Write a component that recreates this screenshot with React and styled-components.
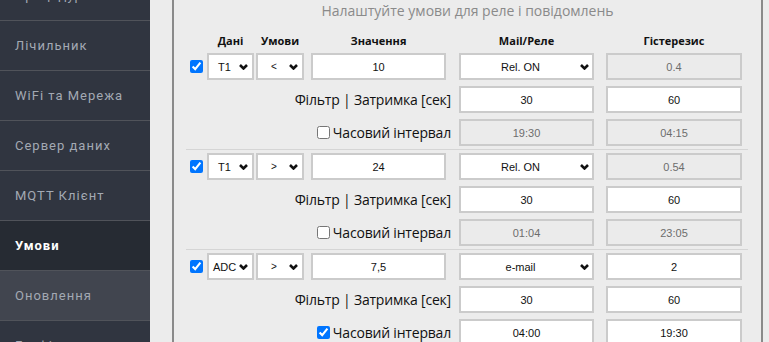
import React, { useState } from "react";
import styled, { createGlobalStyle } from "styled-components";

const GlobalStyle = createGlobalStyle`
  html, body {
    margin: 0;
    padding: 0;
    background: #ececec;
  }
  body {
    font-family: "Liberation Sans", Arial, sans-serif;
  }
`;

const Page = styled.div`
  display: flex;
  height: 100vh;
  overflow: hidden;
`;

const Sidebar = styled.nav`
  width: 150px;
  flex-shrink: 0;
  background: #303540;
  overflow: hidden;
`;

const Menu = styled.ul`
  list-style: none;
  margin: -29px 0 0 0; /* список прокручено вгору */
  padding: 0;
`;

const MenuItem = styled.li`
  height: 49px;
  line-height: 49px;
  padding-left: 15px;
  border-bottom: 1px solid #50535a;
  font-family: Roboto, "Liberation Sans", sans-serif;
  font-size: 13px;
  letter-spacing: 1px;
  color: ${(p) => (p.$active ? "#ffffff" : "#a3a9b3")};
  font-weight: ${(p) => (p.$active ? 700 : 400)};
  background: ${(p) =>
    p.$active ? "#262b33" : p.$hover ? "#41454f" : "transparent"};
  white-space: nowrap;
`;

const Main = styled.main`
  flex: 1;
  padding: 0 6px 0 22px;
  display: flex;
`;

const Panel = styled.section`
  flex: 1;
  background: #ececec;
  border-left: 2px solid #8a8a8a;
  border-right: 2px solid #8a8a8a;
`;

const Title = styled.h2`
  margin: 0;
  height: 22px;
  line-height: 22px;
  text-align: center;
  font-family: "Open Sans", "Noto Sans", sans-serif;
  font-weight: 400;
  font-size: 14px;
  color: #8a8a8a;
`;

const Grid = styled.div`
  margin-left: 12px;
  width: 562px;
  display: grid;
  grid-template-columns: 21px 49px 55px 148px 147px 142px;
  align-items: center;
`;

const HeaderRow = styled(Grid)`
  margin-top: 8px;
  height: 20px;
  margin-bottom: 3px;
`;

const HeadCell = styled.div`
  grid-column: ${(p) => p.$col};
  width: ${(p) => p.$w}px;
  text-align: center;
  font-family: "Open Sans", "Noto Sans", sans-serif;
  font-weight: 700;
  font-size: 11px;
  color: #111;
`;

const Group = styled(Grid)`
  row-gap: 6px;
  padding: 0 0 3px 0;
  margin-bottom: 3px;
  border-bottom: 1px solid #d5d5d5;
`;

const Check = styled.input.attrs({ type: "checkbox" })`
  width: 13px;
  height: 13px;
  margin: 0 0 0 4px;
  accent-color: #0075ff;
`;

const SelectBox = styled.div`
  position: relative;
  width: ${(p) => p.$w}px;
  height: 27px;
`;

const Select = styled.select`
  appearance: none;
  width: 100%;
  height: 100%;
  box-sizing: border-box;
  border: 2px solid #cbcbcb;
  background: #fff;
  padding: 0 12px 0 0;
  text-align: center;
  text-align-last: center;
  font-family: "Liberation Sans", Arial, sans-serif;
  font-size: ${(p) => (p.$small ? 10 : 11)}px;
  color: #111;
  outline: none;
`;

const Chevron = styled.svg`
  position: absolute;
  right: ${(p) => p.$r}px;
  top: 11px;
  pointer-events: none;
`;

const Field = styled.input`
  width: ${(p) => p.$w || 135}px;
  height: 27px;
  box-sizing: border-box;
  border: 2px solid #cbcbcb;
  background: ${(p) => (p.disabled ? "#ebebeb" : "#fff")};
  text-align: center;
  font-family: "Liberation Sans", Arial, sans-serif;
  font-size: 11px;
  color: ${(p) => (p.disabled ? "#6d6d6d" : "#111")};
  padding: 0;
  outline: none;
`;

const RowLabel = styled.label`
  grid-column: 1 / 5;
  justify-self: end;
  padding-right: 8px;
  display: flex;
  align-items: center;
  gap: 3px;
  font-family: "Open Sans", "Noto Sans", sans-serif;
  font-size: 14px;
  letter-spacing: -0.2px;
  color: #111;
  white-space: nowrap;
`;

const SmallCheck = styled.input.attrs({ type: "checkbox" })`
  width: 13px;
  height: 13px;
  margin: 0;
  accent-color: #0075ff;
`;

const ChevronIcon = ({ r }) => (
  <Chevron $r={r} width="9" height="6" viewBox="0 0 9 6">
    <polyline
      points="1,1 4.5,4.5 8,1"
      fill="none"
      stroke="#111"
      strokeWidth="2.6"
    />
  </Chevron>
);

const menu = [
  "Процедури",
  "Лічильник",
  "WiFi та Мережа",
  "Сервер даних",
  "MQTT Клієнт",
  "Умови",
  "Оновлення",
  "Графіки",
];

const initialRules = [
  { on: true, src: "T1", cond: "<", value: "10", out: "Rel. ON", hyst: "0.4", hystOff: true, filter: "30", delay: "60", timeOn: false, from: "19:30", to: "04:15" },
  { on: true, src: "T1", cond: ">", value: "24", out: "Rel. ON", hyst: "0.54", hystOff: true, filter: "30", delay: "60", timeOn: false, from: "01:04", to: "23:05" },
  { on: true, src: "ADC", cond: ">", value: "7,5", out: "e-mail", hyst: "2", hystOff: false, filter: "30", delay: "60", timeOn: true, from: "04:00", to: "19:30" },
];

const RuleGroup = ({ rule, onChange }) => {
  const set = (key) => (e) =>
    onChange({
      ...rule,
      [key]: e.target.type === "checkbox" ? e.target.checked : e.target.value,
    });

  return (
    <Group>
      <Check checked={rule.on} onChange={set("on")} />
      <SelectBox $w={47}>
        <Select value={rule.src} onChange={set("src")}>
          <option>T1</option>
          <option>T2</option>
          <option>ADC</option>
        </Select>
        <ChevronIcon r={6} />
      </SelectBox>
      <SelectBox $w={48}>
        <Select $small value={rule.cond} onChange={set("cond")}>
          <option>{"<"}</option>
          <option>{">"}</option>
        </Select>
        <ChevronIcon r={6} />
      </SelectBox>
      <Field value={rule.value} onChange={set("value")} />
      <SelectBox $w={135}>
        <Select value={rule.out} onChange={set("out")}>
          <option>Rel. ON</option>
          <option>Rel. OFF</option>
          <option>e-mail</option>
        </Select>
        <ChevronIcon r={5} />
      </SelectBox>
      <Field $w={136} value={rule.hyst} disabled={rule.hystOff} onChange={set("hyst")} />

      <RowLabel>Фільтр | Затримка [сек]</RowLabel>
      <Field value={rule.filter} onChange={set("filter")} />
      <Field $w={136} value={rule.delay} onChange={set("delay")} />

      <RowLabel>
        <SmallCheck checked={rule.timeOn} onChange={set("timeOn")} />
        Часовий інтервал
      </RowLabel>
      <Field value={rule.from} disabled={!rule.timeOn} onChange={set("from")} />
      <Field $w={136} value={rule.to} disabled={!rule.timeOn} onChange={set("to")} />
    </Group>
  );
};

const App = () => {
  const [rules, setRules] = useState(initialRules);

  const update = (i) => (r) => setRules(rules.map((x, j) => (j === i ? r : x)));

  return (
    <>
      <GlobalStyle />
      <Page>
        <Sidebar>
          <Menu>
            {menu.map((m) => (
              <MenuItem key={m} $active={m === "Умови"} $hover={m === "Оновлення"}>
                {m}
              </MenuItem>
            ))}
          </Menu>
        </Sidebar>
        <Main>
          <Panel>
            <Title>Налаштуйте умови для реле і повідомлень</Title>
            <HeaderRow>
              <HeadCell $col={2} $w={47}>Дані</HeadCell>
              <HeadCell $col={3} $w={48}>Умови</HeadCell>
              <HeadCell $col={4} $w={135}>Значення</HeadCell>
              <HeadCell $col={5} $w={135}>Mail/Реле</HeadCell>
              <HeadCell $col={6} $w={136}>Гістерезис</HeadCell>
            </HeaderRow>
            {rules.map((r, i) => (
              <RuleGroup key={i} rule={r} onChange={update(i)} />
            ))}
          </Panel>
        </Main>
      </Page>
    </>
  );
};

export default App;
